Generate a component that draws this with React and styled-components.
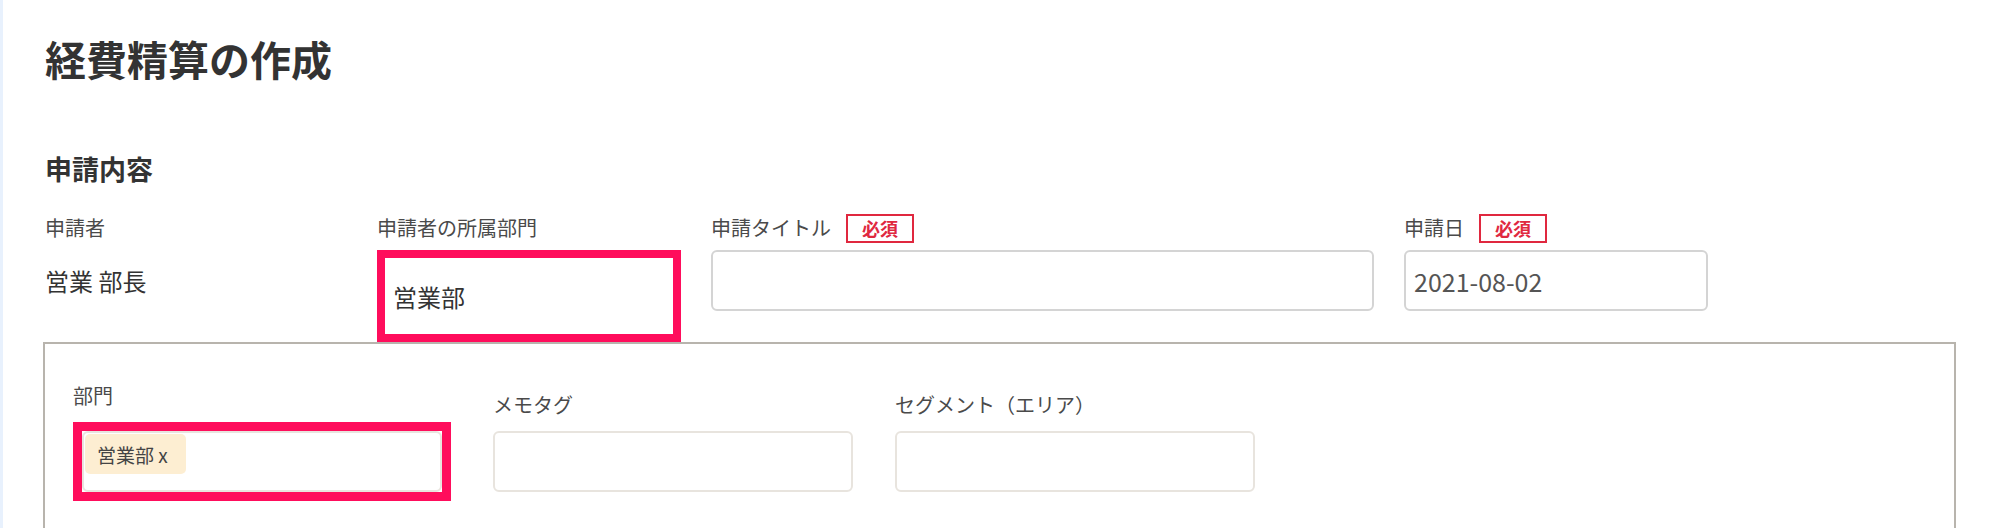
import React from "react";
import styled, { createGlobalStyle } from "styled-components";

const GlobalStyle = createGlobalStyle`
  html, body {
    margin: 0;
    padding: 0;
    background: #fff;
  }
  body {
    font-family: "Noto Sans CJK JP", "Noto Sans", sans-serif;
    color: #333;
  }
`;

const Page = styled.div`
  box-sizing: border-box;
  height: 528px;
  overflow: hidden;
  border-left: 3px solid #e8f1fd;
  padding: 34px 43px 0 42px;
`;

const Title = styled.h1`
  margin: 0;
  font-size: 41px;
  font-weight: 700;
  line-height: 48px;
  color: #333;
`;

const SectionTitle = styled.h2`
  margin: 68px 0 0;
  font-size: 27px;
  font-weight: 700;
  line-height: 38px;
  color: #333;
`;

const TopRow = styled.div`
  display: grid;
  grid-template-columns: 302px 304px 663px 304px;
  column-gap: 30px;
  align-items: start;
  margin-top: 25px;
`;

const Field = styled.div`
  display: flex;
  flex-direction: column;
  gap: 7px;
`;

const LabelRow = styled.div`
  display: flex;
  align-items: center;
  gap: 15px;
  height: 30px;
`;

const Label = styled.span`
  font-size: 20px;
  line-height: 28px;
  color: #4a4a4a;
  white-space: nowrap;
`;

const Required = styled.span`
  border: 2px solid #e0283f;
  color: #e0283f;
  font-size: 18px;
  font-weight: 700;
  line-height: 25px;
  padding: 0 14px;
`;

const StaticValue = styled.div`
  height: 61px;
  display: flex;
  align-items: center;
  font-size: 24px;
  color: #333;
`;

const Highlight = styled.div`
  border: ${(p) => p.$width || 8}px solid #ff0d5c;
  background: #fff;
`;

const Input = styled.div`
  box-sizing: border-box;
  height: ${(p) => p.$height || 61}px;
  border: ${(p) => (p.$bare ? "none" : `2px solid ${p.$soft ? "#e8e4de" : "#d4d4d4"}`)};
  border-radius: ${(p) => (p.$bare ? 0 : 6)}px;
  background: #fff;
  display: flex;
  align-items: ${(p) => (p.$tags ? "flex-start" : "center")};
  padding: ${(p) => (p.$tags ? "1px" : "0 8px")};
  font-size: ${(p) => p.$size || 24}px;
  color: ${(p) => (p.$bare ? "#333" : "#555")};
`;

const DetailBox = styled.div`
  border: 2px solid #b8b4ad;
  margin-left: -2px;
  height: 300px;
  padding: 38px 28px 0;
`;

const DetailRow = styled.div`
  display: flex;
  align-items: center;
  gap: 42px;
`;

const DetailField = styled(Field)`
  width: ${(p) => p.$w}px;
  gap: 12px;
`;

const Tag = styled.span`
  display: inline-flex;
  align-items: center;
  height: 40px;
  padding: 0 18px 0 12px;
  border-radius: 5px;
  background: #fdeed2;
  font-size: 19px;
  color: #444;
`;

export default function App() {
  return (
    <>
      <GlobalStyle />
      <Page>
        <Title>経費精算の作成</Title>
        <SectionTitle>申請内容</SectionTitle>

        <TopRow>
          <Field>
            <LabelRow>
              <Label>申請者</Label>
            </LabelRow>
            <StaticValue>営業 部長</StaticValue>
          </Field>

          <Field>
            <LabelRow>
              <Label>申請者の所属部門</Label>
            </LabelRow>
            <Highlight>
              <Input $bare $height={76}>
                営業部
              </Input>
            </Highlight>
          </Field>

          <Field>
            <LabelRow>
              <Label>申請タイトル</Label>
              <Required>必須</Required>
            </LabelRow>
            <Input />
          </Field>

          <Field>
            <LabelRow>
              <Label>申請日</Label>
              <Required>必須</Required>
            </LabelRow>
            <Input $size={25}>2021-08-02</Input>
          </Field>
        </TopRow>

        <DetailBox>
          <DetailRow>
            <DetailField $w={378}>
              <Label>部門</Label>
              <Highlight $width={9}>
                <Input $soft $tags>
                  <Tag>営業部 x</Tag>
                </Input>
              </Highlight>
            </DetailField>

            <DetailField $w={360}>
              <Label>メモタグ</Label>
              <Input $soft />
            </DetailField>

            <DetailField $w={360}>
              <Label>セグメント（エリア）</Label>
              <Input $soft />
            </DetailField>
          </DetailRow>
        </DetailBox>
      </Page>
    </>
  );
}
